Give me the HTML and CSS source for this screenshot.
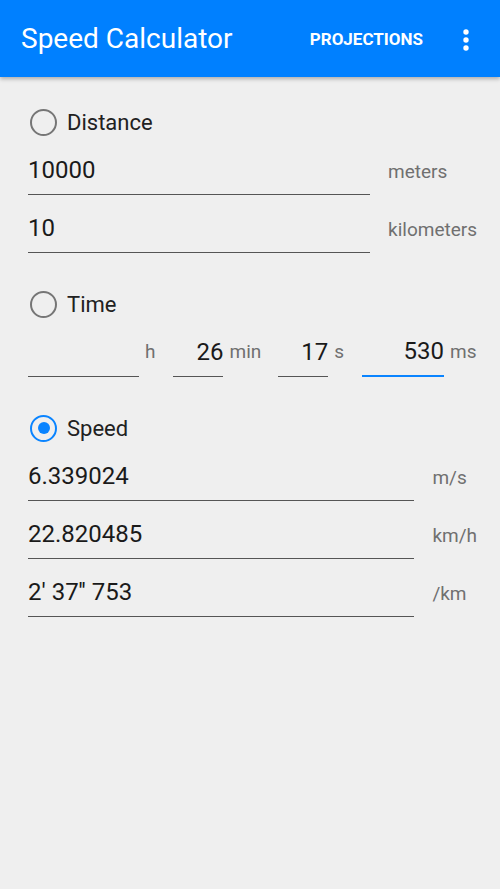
FILE: index.html
```html
<!DOCTYPE html>
<html lang="en">
<head>
    <meta charset="UTF-8">
    <meta name="viewport" content="width=device-width, initial-scale=1.0">
    <title>Speed Calculator</title>
    <link rel="stylesheet" href="styles.css">
</head>
<body>
    <header class="appbar">
        <h1 class="title">Speed Calculator</h1>
        <button class="action">PROJECTIONS</button>
        <button class="overflow" aria-label="More options">
            <svg width="48" height="48" viewBox="0 0 48 48">
                <circle cx="24" cy="23" r="2.7" fill="#fff"/>
                <circle cx="24" cy="31" r="2.7" fill="#fff"/>
                <circle cx="24" cy="39" r="2.7" fill="#fff"/>
            </svg>
        </button>
    </header>

    <main class="content">
        <!-- Distance -->
        <section class="group">
            <label class="choice"><span class="radio"></span>Distance</label>
            <div class="fields">
                <input class="value" type="text" value="10000">
                <span class="unit">meters</span>
                <input class="value" type="text" value="10">
                <span class="unit">kilometers</span>
            </div>
        </section>

        <!-- Time -->
        <section class="group">
            <label class="choice"><span class="radio"></span>Time</label>
            <div class="time-row">
                <input class="value num hours" type="text" value="">
                <span class="unit t-unit">h</span>
                <input class="value num mins" type="text" value="26">
                <span class="unit t-unit">min</span>
                <input class="value num secs" type="text" value="17">
                <span class="unit t-unit">s</span>
                <input class="value num millis active" type="text" value="530">
                <span class="unit t-unit">ms</span>
            </div>
        </section>

        <!-- Speed -->
        <section class="group">
            <label class="choice"><span class="radio checked"></span>Speed</label>
            <div class="fields">
                <input class="value" type="text" value="6.339024">
                <span class="unit">m/s</span>
                <input class="value" type="text" value="22.820485">
                <span class="unit">km/h</span>
                <input class="value" type="text" value="2' 37'' 753">
                <span class="unit">/km</span>
            </div>
        </section>
    </main>
</body>
</html>
```

FILE: styles.css
```css
body {
    margin: 0;
    font-family: Roboto, "Noto Sans", Arial, sans-serif;
    background-color: #efefef;
    color: #212121;
}

.appbar {
    display: flex;
    align-items: center;
    height: 77px;
    padding: 0 10px 0 21px;
    background-color: #0080ff;
    color: #fff;
    box-shadow: 0 2px 4px rgba(0, 0, 0, 0.28);
}
.title {
    flex: 1;
    margin: 0;
    font-size: 28px;
    font-weight: 400;
}
.action {
    margin-right: 19px;
    padding: 0;
    border: none;
    background: none;
    color: #fff;
    font-family: inherit;
    font-size: 17px;
    font-weight: 700;
}
.overflow {
    width: 48px;
    height: 48px;
    padding: 0;
    border: none;
    background: none;
}
.overflow svg {
    display: block;
    margin-top: -12px;
}

.content {
    padding: 23px 23px 0 28px;
}
.group + .group {
    margin-top: 29px;
}

.choice {
    display: flex;
    align-items: center;
    height: 44px;
    font-size: 22px;
}
.radio {
    box-sizing: border-box;
    width: 27px;
    height: 27px;
    margin: 0 10px 0 2px;
    border: 2.5px solid #767676;
    border-radius: 50%;
    display: flex;
    align-items: center;
    justify-content: center;
}
.radio.checked {
    border-color: #0a84ff;
}
.radio.checked::after {
    content: "";
    width: 12px;
    height: 12px;
    border-radius: 50%;
    background-color: #0a84ff;
}

.fields {
    display: grid;
    grid-template-columns: 1fr auto;
    column-gap: 18px;
    row-gap: 8px;
    margin-top: 1px;
}
.value {
    box-sizing: border-box;
    width: 100%;
    height: 50px;
    padding: 0;
    border: none;
    border-bottom: 1.5px solid #555;
    background: transparent;
    font-family: inherit;
    font-size: 24px;
    color: #1a1a1a;
    outline: none;
}
.unit {
    box-sizing: border-box;
    height: 50px;
    padding-top: 3px;
    line-height: 48px;
    font-size: 19px;
    color: #707070;
}

.time-row {
    display: flex;
    margin-top: 1px;
}
.value.num {
    text-align: right;
}
.hours { width: 111px; }
.mins { width: 50px; margin-left: 18px; }
.secs { width: 50px; margin-left: 17px; }
.millis { width: 82px; margin-left: 18px; }
.value.active {
    border-bottom: 2px solid #0a84ff;
}
.unit.t-unit {
    margin-left: 6px;
    padding-top: 1px;
}
```
